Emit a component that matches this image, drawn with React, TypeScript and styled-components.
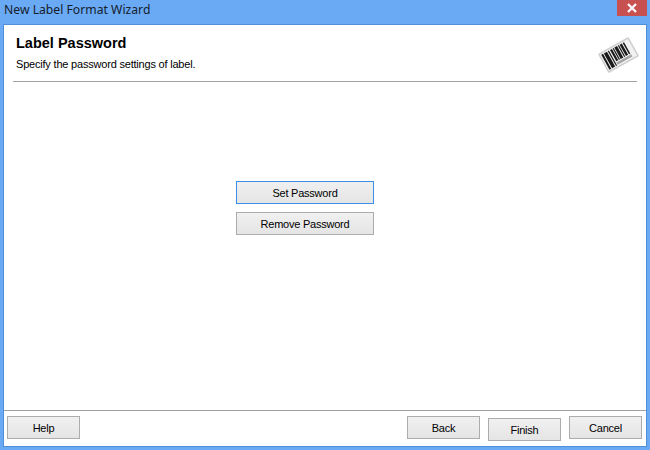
import React from "react";
import styled, { createGlobalStyle } from "styled-components";

const GlobalStyle = createGlobalStyle`
  html, body {
    margin: 0;
    padding: 0;
    background: #6aaaf5;
  }
  body {
    font-family: "Liberation Sans", Arial, sans-serif;
  }
`;

const BARS = [
  [2.5, 2], [5.5, 3.5], [10, 1.2], [12.5, 2.2], [15.5, 1.2], [17.5, 3], [21.5, 1.2], [23.5, 2.5], [27, 1.5],
];

const BarcodeIcon = () => (
  <svg width="41" height="38" viewBox="0 0 41 38" aria-hidden="true">
    <g transform="rotate(-29 20.5 19)">
      <rect x="3" y="8" width="35" height="22" rx="1.5" fill="#cfcfcf" />
      <rect x="4.5" y="9.5" width="32" height="19" fill="#f2f2f2" />
      {BARS.map(([x, w]) => (
        <rect key={x} x={x + 3} y="10.5" width={w} height={x > 10 ? 13 : 17} fill="#1a1a1a" />
      ))}
      <rect x="15" y="24.5" width="17" height="2.5" fill="#a5a5a5" />
    </g>
  </svg>
);

const CloseIcon = () => (
  <svg width="10" height="10" viewBox="0 0 10 10" aria-hidden="true">
    <path d="M1 1 L9 9 M9 1 L1 9" stroke="#fff" strokeWidth="2.2" />
  </svg>
);

export default function App() {
  return (
    <Frame>
      <GlobalStyle />
      <TitleBar>
        <WindowTitle>New Label Format Wizard</WindowTitle>
        <CloseButton>
          <CloseIcon />
        </CloseButton>
      </TitleBar>
      <ClientArea>
        <Header>
          <HeaderText>
            <Heading>Label Password</Heading>
            <SubHeading>Specify the password settings of label.</SubHeading>
          </HeaderText>
          <IconSlot>
            <BarcodeIcon />
          </IconSlot>
        </Header>
        <Body>
          <PasswordButton $focused>Set Password</PasswordButton>
          <PasswordButton>Remove Password</PasswordButton>
        </Body>
        <Footer>
          <FooterButton>Help</FooterButton>
          <FooterRight>
            <FooterButton>Back</FooterButton>
            <FooterButton $low>Finish</FooterButton>
            <FooterButton>Cancel</FooterButton>
          </FooterRight>
        </Footer>
      </ClientArea>
    </Frame>
  );
}

const Frame = styled.div`
  width: 650px;
  height: 450px;
  display: flex;
  flex-direction: column;
  background: #6aaaf5;
  box-sizing: border-box;
  padding: 0 3px 3px 3px;
  overflow: hidden;
`;

const TitleBar = styled.div`
  height: 24px;
  flex: none;
  display: flex;
  align-items: flex-start;
  justify-content: space-between;
`;

const WindowTitle = styled.div`
  font-family: "Noto Sans", sans-serif;
  font-size: 12.2px;
  line-height: 20px;
  padding-left: 1px;
  color: #14202c;
`;

const CloseButton = styled.div`
  width: 30px;
  height: 16px;
  background: #c75050;
  display: flex;
  align-items: center;
  justify-content: center;
`;

const ClientArea = styled.div`
  flex: 1;
  display: flex;
  flex-direction: column;
  background: #fff;
  border: 1px solid #4f8fd8;
  min-height: 0;
`;

const Header = styled.div`
  height: 56px;
  flex: none;
  margin: 0 9px;
  padding: 0 0 0 3px;
  border-bottom: 1px solid #a0a0a0;
  display: flex;
  justify-content: space-between;
`;

const HeaderText = styled.div`
  display: flex;
  flex-direction: column;
`;

const Heading = styled.div`
  font-size: 14.5px;
  font-weight: bold;
  line-height: 16px;
  margin-top: 10px;
  color: #000;
`;

const SubHeading = styled.div`
  font-size: 11px;
  letter-spacing: -0.2px;
  line-height: 14px;
  margin-top: 6px;
  color: #000;
`;

const IconSlot = styled.div`
  margin-right: -2px;
  padding-top: 11px;
`;

const Body = styled.div`
  flex: 1;
  display: flex;
  flex-direction: column;
  align-items: flex-start;
  gap: 8px;
  padding: 99px 0 0 232px;
  border-bottom: 1px solid #a0a0a0;
`;

const BaseButton = styled.button`
  font-family: "Liberation Sans", Arial, sans-serif;
  font-size: 11px;
  letter-spacing: -0.23px;
  color: #000;
  background: linear-gradient(#f0f0f0, #e5e5e5);
  box-sizing: border-box;
  padding: 0;
  border: 1px solid #acacac;
`;

const PasswordButton = styled(BaseButton)<{ $focused?: boolean }>`
  width: 138px;
  height: 23px;
  border-color: ${(p) => (p.$focused ? "#3c8fe8" : "#acacac")};
`;

const Footer = styled.div`
  height: 35px;
  flex: none;
  display: flex;
  justify-content: space-between;
  align-items: flex-start;
  padding: 5px 4px 0 3px;
  box-sizing: border-box;
`;

const FooterRight = styled.div`
  display: flex;
  gap: 8px;
`;

const FooterButton = styled(BaseButton)<{ $low?: boolean }>`
  width: 73px;
  height: 23px;
  margin-top: ${(p) => (p.$low ? "2px" : "0")};
`;
